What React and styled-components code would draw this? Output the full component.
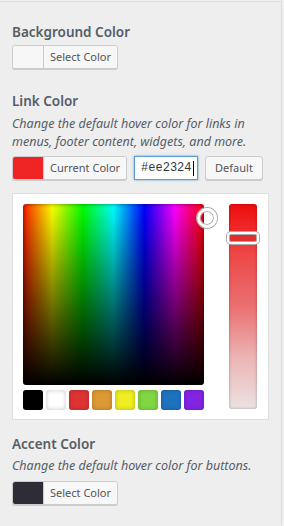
import styled, { createGlobalStyle } from "styled-components";

const Global = createGlobalStyle`
  html, body { margin: 0; padding: 0; background: #eeeeee; }
  body { font-family: "Noto Sans", "Open Sans", sans-serif; }
`;

const Panel = styled.div`
  width: 282px;
  height: 524px;
  margin-top: 1px;
  border-top: 1px solid #dddddd;
  border-right: 1px solid #dddddd;
  padding: 0 0 0 12px;
  box-sizing: border-box;
  background: #eeeeee;
`;

const Section = styled.div`
  display: flex;
  flex-direction: column;
  align-items: flex-start;
  padding-top: ${(p) => p.top}px;
`;

const Title = styled.div`
  font-size: 13.5px;
  font-weight: 600;
  color: #555d66;
  line-height: 20px;
  margin-bottom: ${(p) => p.gap}px;
`;

const Desc = styled.div`
  font-size: 12.5px;
  font-style: italic;
  color: #555d66;
  line-height: 18px;
  width: 250px;
  margin-bottom: ${(p) => p.gap}px;
`;

const Row = styled.div`
  display: flex;
  align-items: center;
  gap: 7px;
`;

const ColorButton = styled.div`
  display: flex;
  height: 24px;
  box-sizing: border-box;
  border: 1px solid #cccccc;
  border-radius: 3px;
  background: #f7f7f7;
  box-shadow: 0 1px 0 #cccccc;
  overflow: hidden;
`;

const Swatch = styled.span`
  width: 30px;
  height: 100%;
  background: ${(p) => p.color};
  border-right: 1px solid #cccccc;
`;

const ButtonText = styled.span`
  font-size: 11px;
  color: #555555;
  line-height: 22px;
  padding: 0 6px;
  background: #f7f7f7;
`;

const HexInput = styled.div`
  width: 64px;
  height: 24px;
  box-sizing: border-box;
  border: 1px solid #5b9dd9;
  box-shadow: 0 0 2px rgba(30, 140, 190, 0.8);
  background: #ffffff;
  font-family: "Liberation Mono", monospace;
  font-size: 12px;
  line-height: 22px;
  color: #32373c;
  padding-left: 6px;
  display: flex;
  align-items: center;
`;

const Caret = styled.span`
  width: 1px;
  height: 15px;
  background: #000;
  margin-left: 1px;
`;

const PlainButton = styled.div`
  height: 24px;
  box-sizing: border-box;
  border: 1px solid #cccccc;
  border-radius: 3px;
  background: #f7f7f7;
  box-shadow: 0 1px 0 #cccccc;
  font-size: 11px;
  color: #555555;
  line-height: 22px;
  padding: 0 9px;
`;

const Picker = styled.div`
  margin-top: 13px;
  width: 257px;
  box-sizing: border-box;
  background: #ffffff;
  border: 1px solid #dfdfdf;
  padding: 10px 11px 9px 10px;
  display: flex;
  justify-content: space-between;
`;

const LeftCol = styled.div`
  display: flex;
  flex-direction: column;
  gap: 5px;
`;

const Square = styled.div`
  position: relative;
  width: 181px;
  height: 181px;
  border-radius: 3px;
  background: linear-gradient(to bottom, rgba(0, 0, 0, 0), #000000),
    linear-gradient(
      to right,
      #ff1a00,
      #ffff00 16%,
      #00ff00 33%,
      #00ffff 50%,
      #0000ff 67%,
      #ff00ff 84%,
      #ff0000
    );
  box-shadow: inset 0 0 4px rgba(0, 0, 0, 0.5);
`;

const Handle = styled.span`
  position: absolute;
  right: -13px;
  top: 4px;
  width: 14px;
  height: 14px;
  border-radius: 50%;
  border: 3px solid #ffffff;
  box-shadow: 0 0 0 1px #aaaaaa, inset 0 0 0 1px #aaaaaa;
`;

const Palette = styled.div`
  display: flex;
  gap: 3px;
`;

const Chip = styled.span`
  width: 20px;
  height: 20px;
  border-radius: 3px;
  background: ${(p) => p.color};
  box-shadow: inset 0 0 4px rgba(0, 0, 0, 0.25);
`;

const Slider = styled.div`
  position: relative;
  width: 28px;
  height: 205px;
  border-radius: 3px;
  background: linear-gradient(to bottom, #ee0c0c, #ee4848 25%, #ea7070 50%, #ecb4b4 75%, #ebe2e2);
  box-shadow: inset 0 0 3px rgba(0, 0, 0, 0.3);
`;

const SliderHandle = styled.span`
  position: absolute;
  left: -2px;
  right: -2px;
  top: 28px;
  height: 8px;
  border: 2px solid #ffffff;
  border-radius: 4px;
  box-shadow: 0 0 0 1px #aaaaaa, inset 0 0 0 1px #aaaaaa;
  background: #e02e2e;
`;

const palette = ["#000000", "#ffffff", "#dd3333", "#dd9933", "#eeee22", "#81d742", "#1e73be", "#8224e3"];

export default function App() {
  return (
    <Panel>
      <Global />
      <Section top={20}>
        <Title gap={3}>Background Color</Title>
        <ColorButton>
          <Swatch color="#f7f7f7" />
          <ButtonText>Select Color</ButtonText>
        </ColorButton>
      </Section>
      <Section top={22}>
        <Title gap={4}>Link Color</Title>
        <Desc gap={5}>Change the default hover color for links in menus, footer content, widgets, and more.</Desc>
        <Row>
          <ColorButton>
            <Swatch color="#ee2324" />
            <ButtonText>Current Color</ButtonText>
          </ColorButton>
          <HexInput>
            #ee2324<Caret />
          </HexInput>
          <PlainButton>Default</PlainButton>
        </Row>
        <Picker>
          <LeftCol>
            <Square>
              <Handle />
            </Square>
            <Palette>
              {palette.map((c) => (
                <Chip key={c} color={c} />
              ))}
            </Palette>
          </LeftCol>
          <Slider>
            <SliderHandle />
          </Slider>
        </Picker>
      </Section>
      <Section top={14}>
        <Title gap={3}>Accent Color</Title>
        <Desc gap={6}>Change the default hover color for buttons.</Desc>
        <ColorButton>
          <Swatch color="#2e2c35" />
          <ButtonText>Select Color</ButtonText>
        </ColorButton>
      </Section>
    </Panel>
  );
}
